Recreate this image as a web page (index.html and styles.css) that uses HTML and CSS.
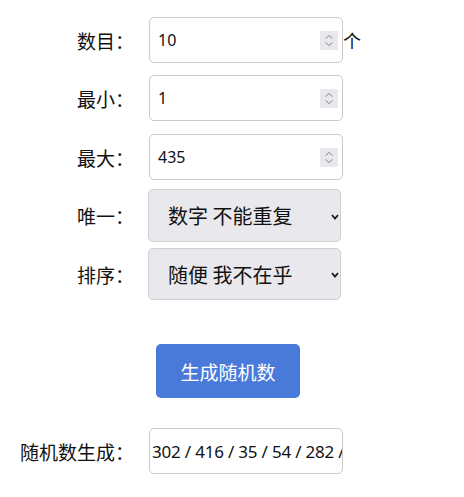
FILE: index.html
```html
<!DOCTYPE html>
<html lang="zh">
<head>
<meta charset="utf-8">
<link rel="stylesheet" href="styles.css">
</head>
<body>
<form class="form">
  <div class="row row-count">
    <label class="label">数目<span class="colon">：</span></label>
    <div class="field">
      <input class="field-input" type="text" value="10">
      <span class="spin"><svg width="18" height="19" viewBox="0 0 18 19"><path d="M5.5 7.5 L9 4.5 L12.5 7.5" fill="none" stroke="#8a8a8a" stroke-width="1"/><path d="M5.5 11.5 L9 14.5 L12.5 11.5" fill="none" stroke="#8a8a8a" stroke-width="1"/></svg></span>
    </div>
    <span class="unit">个</span>
  </div>
  <div class="row row-min">
    <label class="label">最小<span class="colon">：</span></label>
    <div class="field">
      <input class="field-input" type="text" value="1">
      <span class="spin"><svg width="18" height="19" viewBox="0 0 18 19"><path d="M5.5 7.5 L9 4.5 L12.5 7.5" fill="none" stroke="#8a8a8a" stroke-width="1"/><path d="M5.5 11.5 L9 14.5 L12.5 11.5" fill="none" stroke="#8a8a8a" stroke-width="1"/></svg></span>
    </div>
  </div>
  <div class="row row-max">
    <label class="label">最大<span class="colon">：</span></label>
    <div class="field">
      <input class="field-input" type="text" value="435">
      <span class="spin"><svg width="18" height="19" viewBox="0 0 18 19"><path d="M5.5 7.5 L9 4.5 L12.5 7.5" fill="none" stroke="#8a8a8a" stroke-width="1"/><path d="M5.5 11.5 L9 14.5 L12.5 11.5" fill="none" stroke="#8a8a8a" stroke-width="1"/></svg></span>
    </div>
  </div>
  <div class="row row-unique">
    <label class="label">唯一<span class="colon">：</span></label>
    <div class="picker">
      <span class="picker-text">数字 不能重复</span>
      <svg class="chev" width="8" height="6" viewBox="0 0 8 6"><path d="M1 1 L4 4.5 L7 1" fill="none" stroke="#1a1a1a" stroke-width="1.8"/></svg>
    </div>
  </div>
  <div class="row row-sort">
    <label class="label">排序<span class="colon">：</span></label>
    <div class="picker picker-2">
      <span class="picker-text">随便 我不在乎</span>
      <svg class="chev" width="8" height="6" viewBox="0 0 8 6"><path d="M1 1 L4 4.5 L7 1" fill="none" stroke="#1a1a1a" stroke-width="1.8"/></svg>
    </div>
  </div>
  <div class="actions">
    <button type="button" class="btn">生成随机数</button>
  </div>
  <div class="row row-out">
    <label class="label">随机数生成<span class="colon">：</span></label>
    <div class="field field-out">
      <input class="field-input out-input" type="text" value="302 / 416 / 35 / 54 / 282 / 18 / 94">
    </div>
  </div>
</form>
</body>
</html>
```

FILE: styles.css
```css
html, body {
  margin: 0;
  padding: 0;
  background: #fff;
}
body {
  font-family: "Noto Sans CJK SC", "Noto Sans", sans-serif;
  color: #111;
  width: 464px;
  height: 497px;
  overflow: hidden;
}
.form {
  display: flex;
  flex-direction: column;
  padding-top: 17px;
}
.row {
  display: flex;
  align-items: center;
}
.label {
  width: 134px;
  text-align: right;
  font-size: 19px;
  margin-right: 15px;
  white-space: nowrap;
}
.colon {
  font-family: "Noto Sans CJK JP", sans-serif;
}
.field {
  box-sizing: border-box;
  width: 194px;
  height: 46px;
  border: 1px solid #cacaca;
  border-radius: 5px;
  display: flex;
  align-items: center;
  padding: 0 4px 0 8px;
  background: #fff;
}
.field-input {
  flex: 1;
  min-width: 0;
  border: 0;
  outline: none;
  padding: 0;
  font-family: "Noto Sans", sans-serif;
  font-size: 16px;
  color: #111;
  background: transparent;
}
.spin {
  width: 18px;
  height: 19px;
  background: #e9e9ed;
  display: flex;
}
.unit {
  font-size: 18px;
}
.row-min { margin-top: 12px; }
.row-max { margin-top: 13px; }
.row-unique { margin-top: 9px; }
.row-sort { margin-top: 6px; }
.picker {
  box-sizing: border-box;
  width: 193px;
  height: 53px;
  margin-left: -1px;
  border: 1px solid #cfcfd4;
  border-radius: 5px;
  background: #e9e9ed;
  display: flex;
  align-items: center;
  padding: 0 1px 0 19px;
}
.picker-2 { height: 52px; }
.picker-text {
  flex: 1;
  font-size: 20px;
  color: #111;
}
.chev {
  margin-top: 2px;
}
.actions {
  margin-top: 44px;
  padding-left: 156px;
  display: flex;
}
.btn {
  width: 144px;
  height: 54px;
  border: 0;
  border-radius: 5px;
  background: #4a7ad9;
  color: #fff;
  font-family: "Noto Sans CJK SC", sans-serif;
  font-size: 19px;
  padding: 0;
}
.row-out { margin-top: 30px; }
.field-out {
  padding: 0 0 0 2px;
  overflow: hidden;
}
.out-input {
  font-size: 17px;
  letter-spacing: -0.2px;
}
```
